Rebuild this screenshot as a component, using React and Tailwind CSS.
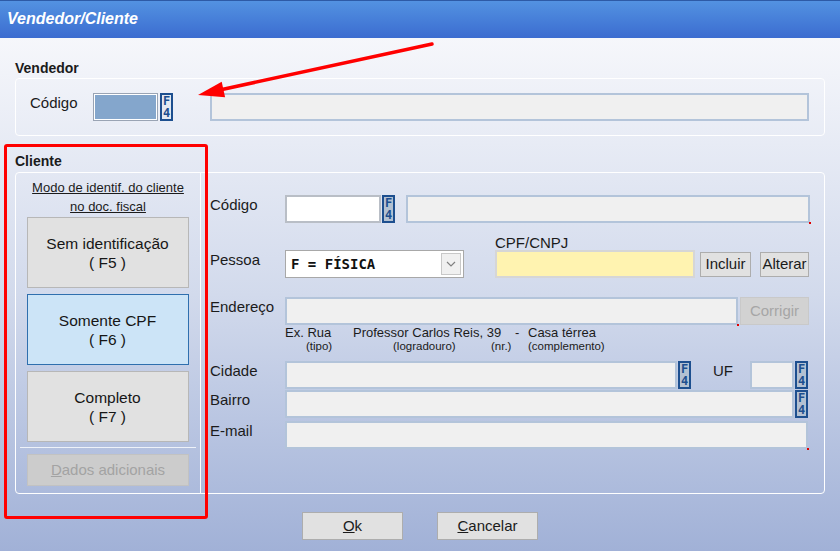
const F4 = ({ light = false }) => (
  <div
    className={`flex h-[28px] w-[13px] shrink-0 flex-col items-center justify-center border-2 border-[#1d4f8f] font-['DejaVu_Sans_Mono',monospace] text-[12px] font-bold leading-[12px] text-[#1d4f8f] ${
      light ? "bg-[#e3e9f1]" : "bg-[#b3c1d2]"
    }`}
  >
    <span className="h-[12px]">F</span>
    <span className="h-[12px]">4</span>
  </div>
);

const Field = ({ w, white = false, dot = false }) => (
  <div className="relative shrink-0" style={{ width: w }}>
    <div
      className={`h-[28px] w-full border-2 ${
        white ? "border-[#b9bec6] bg-white" : "border-[#b3c4da] bg-[#f0f0f0]"
      }`}
    />
    {dot && <div className="absolute -right-[1px] -bottom-[1px] h-[2px] w-[2px] bg-[#e00000]" />}
  </div>
);

const Label = ({ children, w = "w-[75px]" }) => (
  <div className={`${w} shrink-0 self-start pt-[2px] text-[15px] leading-[16px] text-[#1b1b1b]`}>{children}</div>
);

const ModeButton = ({ title, keyName, active = false }) => (
  <button
    className={`flex h-[71px] w-[162px] flex-col items-center justify-center border text-[15.5px] leading-[19px] text-[#161616] ${
      active ? "border-[#2f6fae] bg-[#cce4f7]" : "border-[#b7b7b7] bg-[#e1e1e1]"
    }`}
  >
    <span>{title}</span>
    <span>( {keyName} )</span>
  </button>
);

const Btn = ({ children, className = "" }) => (
  <button className={`flex items-center justify-center border border-[#adadad] bg-[#e1e1e1] text-[15px] text-[#1b1b1b] ${className}`}>
    {children}
  </button>
);

export default function App() {
  return (
    <div className="relative flex h-[551px] w-[840px] flex-col overflow-hidden font-['Liberation_Sans',Arial,sans-serif]">
      <div className="flex h-[38px] shrink-0 items-center border-t border-[#2d5aa6] bg-gradient-to-b from-[#5392e1] to-[#3c6cd0] pl-[7px] pb-[2px]">
        <span className="text-[16px] font-bold italic text-white">Vendedor/Cliente</span>
      </div>

      <div className="flex flex-1 flex-col bg-gradient-to-b from-[#f6f7fb] via-[#d2daec] to-[#a1b1d7] pl-[15px]">
        <div className="mt-[22px] h-[16px] text-[14px] font-bold leading-[16px] text-[#1b1b1b]">Vendedor</div>
        <div className="mt-[2px] flex h-[58px] w-[810px] items-start rounded-[4px] border border-white pt-[14px] pl-[14px]">
          <Label w="w-[63px]">Código</Label>
          <div className="h-[28px] w-[65px] border border-[#9aa4b4] bg-[#84a6cc] shadow-[inset_0_0_0_1px_#ffffff]" />
          <div className="ml-[2px]">
            <F4 light />
          </div>
          <div className="ml-[37px]">
            <Field w={599} />
          </div>
        </div>

        <div className="mt-[17px] h-[16px] text-[14px] font-bold leading-[16px] text-[#1b1b1b]">Cliente</div>
        <div className="mt-[3px] flex h-[322px] w-[810px] rounded-[4px] border border-white">
          <div className="flex w-[185px] flex-col items-center border-r border-white pt-[5px]">
            <div className="text-center text-[13px] leading-[19px] text-[#1b1b1b] underline">
              Modo de identif. do cliente
              <br />
              no doc. fiscal
            </div>
            <div className="mt-[1px] flex flex-col gap-[6px] pr-[1px]">
              <ModeButton title="Sem identificação" keyName="F5" />
              <ModeButton title="Somente CPF" keyName="F6" active />
              <ModeButton title="Completo" keyName="F7" />
            </div>
            <div className="mt-[5px] h-[1px] w-[176px] bg-[#eef2f9]" />
            <button className="mt-[6px] h-[32px] w-[162px] border border-[#c2c2c2] bg-[#cccccc] text-[15px] text-[#a3a3a3]">
              <span className="underline">D</span>ados adicionais
            </button>
          </div>

          <div className="flex flex-1 flex-col pt-[22px] pl-[9px]">
            <div className="flex h-[28px] items-center">
              <Label>Código</Label>
              <Field w={96} white />
              <div className="ml-[1px]">
                <F4 />
              </div>
              <div className="ml-[11px]">
                <Field w={404} dot />
              </div>
            </div>

            <div className="mt-[13px] flex h-[42px] items-end">
              <div className="flex h-[28px] items-start">
                <Label>Pessoa</Label>
              </div>
              <div className="flex h-[28px] w-[179px] items-center border border-[#a8a8a8] bg-white">
                <span className="flex-1 pl-[5px] font-['DejaVu_Sans_Mono',monospace] text-[14px] font-bold text-[#111]">F = FÍSICA</span>
                <div className="mr-[2px] flex h-[22px] w-[20px] items-center justify-center border border-[#c8c8c8] bg-[#f0f0f0]">
                  <svg width="10" height="6" viewBox="0 0 10 6">
                    <path d="M1 1l4 4 4-4" fill="none" stroke="#808080" strokeWidth="1.2" />
                  </svg>
                </div>
              </div>
              <div className="ml-[31px] flex flex-col">
                <div className="h-[14px] text-[15px] leading-[14px] text-[#1b1b1b]">CPF/CNPJ</div>
                <div className="h-[28px] w-[200px] border-2 border-[#d6d6d6] bg-[#fff3b0]" />
              </div>
              <Btn className="mb-[1px] ml-[5px] h-[25px] w-[51px]">Incluir</Btn>
              <Btn className="mb-[1px] ml-[9px] h-[25px] w-[49px]">Alterar</Btn>
            </div>

            <div className="mt-[19px] flex h-[28px] items-center">
              <Label>Endereço</Label>
              <Field w={453} dot />
              <button className="ml-[2px] h-[28px] w-[69px] border border-[#c9c9c9] bg-[#d2d2d2] text-[15px] text-[#a6a6a6]">Corrigir</button>
            </div>

            <div className="ml-[75px] flex h-[15px] text-[13px] leading-[15px] text-[#1b1b1b]">
              <span className="w-[68px]">Ex. Rua</span>
              <span className="w-[162px]">Professor Carlos Reis, 39</span>
              <span className="w-[13px]">-</span>
              <span>Casa térrea</span>
            </div>
            <div className="ml-[96px] flex h-[13px] text-[11.5px] leading-[13px] text-[#1b1b1b]">
              <span className="w-[87px]">(tipo)</span>
              <span className="w-[98px]">(logradouro)</span>
              <span className="w-[37px]">(nr.)</span>
              <span>(complemento)</span>
            </div>

            <div className="mt-[8px] flex h-[28px] items-center">
              <Label>Cidade</Label>
              <Field w={392} />
              <div className="ml-[1px]">
                <F4 />
              </div>
              <Label w="ml-[22px] w-[37px]">UF</Label>
              <Field w={44} />
              <div className="ml-[1px]">
                <F4 />
              </div>
            </div>

            <div className="mt-[1px] flex h-[28px] items-center">
              <Label>Bairro</Label>
              <Field w={509} />
              <div className="ml-[1px]">
                <F4 />
              </div>
            </div>

            <div className="mt-[3px] flex h-[28px] items-center">
              <Label>E-mail</Label>
              <Field w={523} dot />
            </div>
          </div>
        </div>

        <div className="mt-[18px] -ml-[15px] flex justify-center gap-[34px]">
          <Btn className="h-[28px] w-[101px]">
            <span className="underline">O</span>k
          </Btn>
          <Btn className="h-[28px] w-[101px]">
            <span className="underline">C</span>ancelar
          </Btn>
        </div>
      </div>

      <div className="pointer-events-none absolute top-[144px] left-[4px] h-[375px] w-[204px] rounded-[3px] border-[3px] border-[#ff0000]" />
      <svg className="pointer-events-none absolute top-0 left-0" width="840" height="551">
        <line x1="432" y1="44" x2="222" y2="89.5" stroke="#ff0000" strokeWidth="3.5" strokeLinecap="round" />
        <polygon points="198,95 221.7,81.7 225.1,97.3" fill="#ff0000" />
      </svg>
    </div>
  );
}
